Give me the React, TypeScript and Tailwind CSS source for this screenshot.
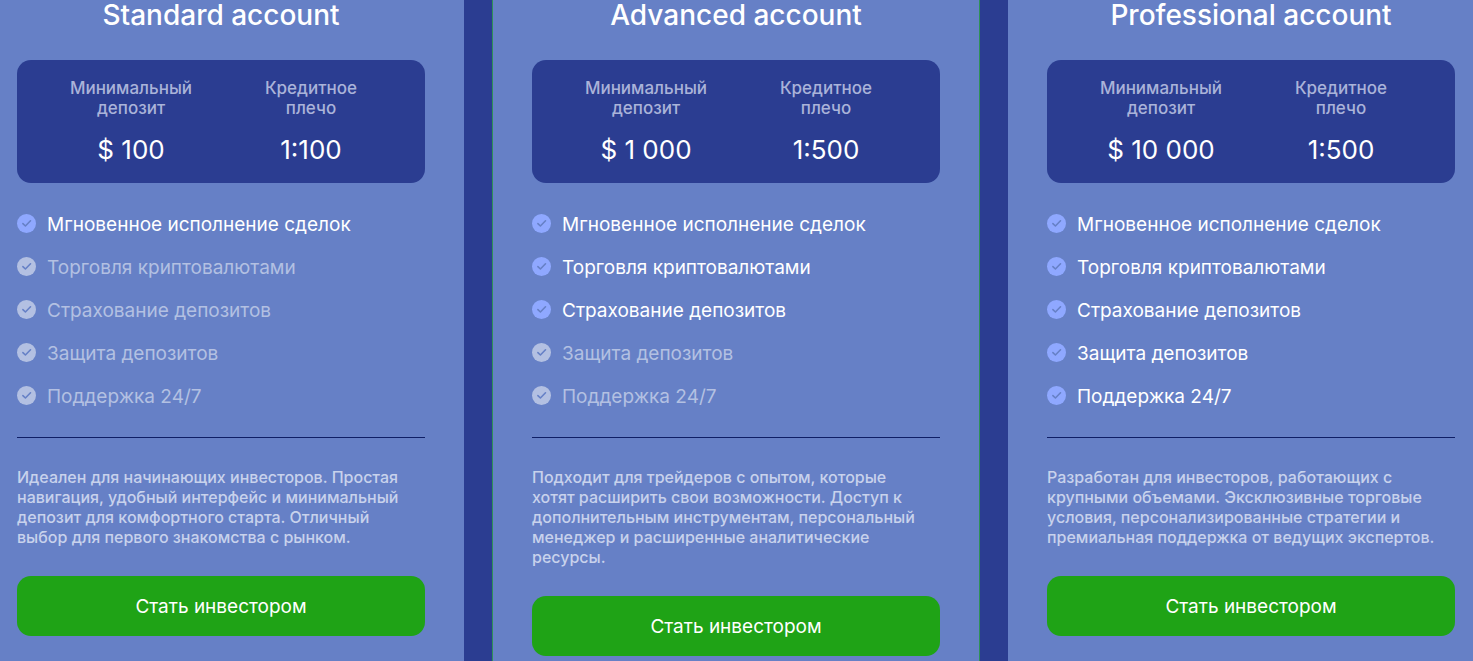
import clsx from "clsx";

interface Account {
  title: string;
  deposit: string;
  leverage: string;
  enabled: number;
  description: string;
  className: string;
}

const FEATURES = [
  "Мгновенное исполнение сделок",
  "Торговля криптовалютами",
  "Страхование депозитов",
  "Защита депозитов",
  "Поддержка 24/7",
];

const ACCOUNTS: Account[] = [
  {
    title: "Standard account",
    deposit: "$ 100",
    leverage: "1:100",
    enabled: 1,
    description:
      "Идеален для начинающих инвесторов. Простая навигация, удобный интерфейс и минимальный депозит для комфортного старта. Отличный выбор для первого знакомства с рынком.",
    className: "pl-[17px] pr-[39px]",
  },
  {
    title: "Advanced account",
    deposit: "$ 1 000",
    leverage: "1:500",
    enabled: 3,
    description:
      "Подходит для трейдеров с опытом, которые хотят расширить свои возможности. Доступ к дополнительным инструментам, персональный менеджер и расширенные аналитические ресурсы.",
    className: "border-x border-[#2f9257] px-[39px]",
  },
  {
    title: "Professional account",
    deposit: "$ 10 000",
    leverage: "1:500",
    enabled: 5,
    description:
      "Разработан для инвесторов, работающих с крупными объемами. Эксклюзивные торговые условия, персонализированные стратегии и премиальная поддержка от ведущих экспертов.",
    className: "pl-[39px] pr-[18px]",
  },
];

function CheckIcon({ active }: { active: boolean }) {
  return (
    <svg
      viewBox="0 0 19 19"
      className={clsx("mt-0.5 size-[19px] shrink-0", active ? "text-[#8fa8ff]" : "text-[#b3c0e2]")}
      aria-hidden="true"
    >
      <circle cx="9.5" cy="9.5" r="9.5" fill="currentColor" />
      <path
        d="M5.9 9.6 8.4 12 13.5 6.8"
        fill="none"
        stroke="#6680c6"
        strokeWidth="1.6"
        strokeLinecap="round"
        strokeLinejoin="round"
      />
    </svg>
  );
}

function Stat({ label, value }: { label: string; value: string }) {
  return (
    <div className="flex flex-col items-center text-center">
      <dt className="max-w-32 text-[17px] leading-5 font-medium text-[#aab3d9]">{label}</dt>
      <dd className="mt-4 text-[26px] leading-8 text-white">{value}</dd>
    </div>
  );
}

function AccountCard({ account }: { account: Account }) {
  return (
    <section className={clsx("min-w-0 flex-1 bg-[#6680c6] pb-[5px]", account.className)}>
      <h2 className="text-center text-[28px] leading-[30px] font-medium text-white">
        {account.title}
      </h2>
      <dl className="mt-[30px] grid grid-cols-2 rounded-[14px] bg-[#2b3d91] px-6 pt-[18px] pb-[17px]">
        <Stat label="Минимальный депозит" value={account.deposit} />
        <Stat label="Кредитное плечо" value={account.leverage} />
      </dl>
      <ul className="mt-[29px] flex flex-col gap-[17px]">
        {FEATURES.map((feature, i) => {
          const active = i < account.enabled;
          return (
            <li key={feature} className="flex items-start gap-[11px]">
              <CheckIcon active={active} />
              <span
                className={clsx(
                  "text-[19px] leading-[26px]",
                  active ? "text-white" : "text-[#b3c0e2]",
                )}
              >
                {feature}
              </span>
            </li>
          );
        })}
      </ul>
      <hr className="mt-[27px] border-[#0f1f66]" />
      <p className="mt-[29px] pr-2 text-[16px] leading-5 font-medium text-[#c8d2ec]">
        {account.description}
      </p>
      <button
        type="button"
        className="mt-[29px] h-15 w-full rounded-[14px] bg-[#1fa316] pt-0.5 text-[19px] text-white"
      >
        Стать инвестором
      </button>
    </section>
  );
}

export default function App() {
  return (
    <main className="flex min-h-screen gap-7 bg-[#2b3d91] font-['Inter',sans-serif]">
      {ACCOUNTS.map((account) => (
        <AccountCard key={account.title} account={account} />
      ))}
    </main>
  );
}
